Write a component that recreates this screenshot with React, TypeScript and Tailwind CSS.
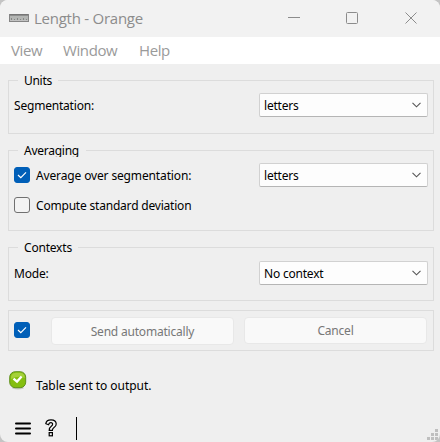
import type { ReactNode } from 'react';

const uiFont = "font-['Noto_Sans','DejaVu_Sans',sans-serif]";
const titleFont = "font-['Open_Sans','Noto_Sans',sans-serif]";

function Group({ title, legendClass, className, children }: { title: string; legendClass: string; className: string; children: ReactNode }) {
  return (
    <section className={`relative border border-[#dcdcdc] ${className}`}>
      <h2 className={`absolute left-[9px] -top-[9px] bg-[#efefef] pl-[6px] leading-[18px] whitespace-nowrap ${legendClass}`}>{title}</h2>
      {children}
    </section>
  );
}

function Select({ value, textClass }: { value: string; textClass: string }) {
  return (
    <div className="flex h-6 w-[169px] items-center justify-between rounded-[2px] border border-[#d1d1d1] border-b-[#b5b5b5] bg-[#fdfdfd] pr-[6px] pl-1">
      <span className={`pt-[2px] ${textClass}`}>{value}</span>
      <svg width="9" height="6" viewBox="0 0 9 6" fill="none" stroke="#555" strokeWidth="1.1">
        <path d="M0.5 0.8 L4.5 4.8 L8.5 0.8" />
      </svg>
    </div>
  );
}

function Checkbox({ checked }: { checked?: boolean }) {
  return (
    <span className={`flex h-4 w-4 shrink-0 items-center justify-center rounded-[3px] border ${checked ? 'border-[#005fb8] bg-[#005fb8]' : 'border-[#707070] bg-[#f3f3f3]'}`}>
      {checked && (
        <svg width="10" height="8" viewBox="0 0 10 8" fill="none" stroke="#fff" strokeWidth="1.2">
          <path d="M1 4 L3.8 6.6 L9 1.4" />
        </svg>
      )}
    </span>
  );
}

export default function App() {
  return (
    <div className="h-[442px] w-[440px] overflow-hidden bg-[#c4c4c4]">
      <main className={`relative flex h-[442px] flex-col overflow-hidden rounded-[8px] bg-[#efefef] text-[12px] text-black ${uiFont}`}>
        <header className={`flex h-[37px] shrink-0 items-center bg-[#f2f2f2] text-[#8c8c8c] ${titleFont}`}>
          <svg className="mb-px ml-[9px]" width="20" height="8" viewBox="0 0 20 8">
            <rect x="0.5" y="0.5" width="19" height="7" fill="#b4b6b4" stroke="#858585" />
            <path d="M1 1H19" stroke="#666" />
            <path d="M2.5 6V4M5.5 6V5M8.5 6V4M11.5 6V5M14.5 6V4M17.5 6V5" stroke="#858785" />
            <path d="M1 6.5H19" stroke="#c2c2c2" />
          </svg>
          <span className="mb-px ml-[5px] w-[252px] text-[15px] leading-5 tracking-[-0.25px]">Length - Orange</span>
          <svg className="mb-px" width="132" height="14" viewBox="0 0 132 14" fill="none" stroke="#8c8c8c">
            <path d="M2 6.5H14" />
            <rect x="60.5" y="1.5" width="11" height="11" rx="1" />
            <path d="M119.5 1.5 L130.5 12.5 M130.5 1.5 L119.5 12.5" />
          </svg>
        </header>
        <nav className={`flex h-[27px] shrink-0 items-center bg-white pl-[11px] text-[15px] text-[#9a9a9a] ${titleFont}`}>
          <span className="w-[52px] tracking-[-0.4px]">View</span>
          <span className="w-[76px] tracking-[-0.4px]">Window</span>
          <span className="tracking-[-0.4px]">Help</span>
        </nav>

        <div className="flex flex-col pr-[6px] pl-2 pt-4">
          <Group title="Units" legendClass="w-[40px] tracking-[-0.3px]" className="h-[54px]">
            <div className="flex items-center justify-between pt-3 pr-[5px] pl-[5px]">
              <span className="pt-[2px] tracking-[-0.2px]">Segmentation:</span>
              <Select value="letters" textClass="tracking-[-0.2px]" />
            </div>
          </Group>
          <Group title="Averaging" legendClass="h-[15px] w-[68px] overflow-hidden tracking-[-0.25px]" className="mt-4 h-[81px]">
            <div className="flex items-center pt-3 pr-[5px] pl-[5px]">
              <Checkbox checked />
              <span className="ml-[6px] grow pt-[2px] tracking-[-0.14px]">Average over segmentation:</span>
              <Select value="letters" textClass="tracking-[-0.2px]" />
            </div>
            <div className="mt-[9px] flex h-[18px] items-center pl-[5px]">
              <Checkbox />
              <span className="ml-[6px] pt-[2px] leading-[18px] tracking-[-0.2px]">Compute standard deviation</span>
            </div>
          </Group>
          <Group title="Contexts" legendClass="w-[60px] tracking-[-0.2px]" className="mt-4 h-[54px]">
            <div className="flex items-center justify-between pt-[13px] pr-[5px] pl-[5px]">
              <span className="pt-[2px] tracking-[-0.2px]">Mode:</span>
              <Select value="No context" textClass="tracking-[-0.2px]" />
            </div>
          </Group>
          <section className="mt-[9px] flex h-[41px] items-start border border-[#dcdcdc] pt-[6px] pl-[5px]">
            <div className="pt-[5px]"><Checkbox checked /></div>
            <button className="ml-[21px] h-7 w-[183px] rounded-[4px] border border-[#e8e8e8] bg-[#f9f9f9] pt-[2px] text-[#777] tracking-[-0.2px]">Send automatically</button>
            <button className="ml-[10px] h-[27px] w-[183px] rounded-[4px] border border-[#e8e8e8] bg-[#f9f9f9] text-[#777] tracking-[-0.2px]">Cancel</button>
          </section>
        </div>

        <div className="mt-5 flex h-[24px] items-start pl-[9px]">
          <svg width="18" height="19" viewBox="0 0 18 19">
            <ellipse cx="9" cy="17" rx="6" ry="1.5" fill="#c9cbc5" />
            <rect x="0.7" y="0.7" width="16" height="16" rx="5.5" fill="#84be10" stroke="#578a12" strokeWidth="0.9" />
            <path d="M2 8 Q1.5 2 7 1.8 H11 Q16 2 15.8 7 Q9 4 2 8Z" fill="#a5d13a" />
            <path d="M4.5 7.6 L8 10.6 L12.6 5.4" fill="none" stroke="#fff" strokeWidth="2.3" />
          </svg>
          <span className="mt-[6px] ml-[9px] leading-[18px] tracking-[-0.04px]">Table sent to output.</span>
        </div>
        <footer className="mt-[22px] flex h-[23px] items-start pl-[15px]">
          <svg className="mt-[5px]" width="16" height="13" viewBox="0 0 16 13">
            <path d="M1 1.5H15M1 6.5H15M1 11.5H15" stroke="#000" strokeWidth="2" strokeLinecap="round" />
          </svg>
          <svg className="mt-[2px] ml-[14px]" width="12" height="18" viewBox="0 0 12 18" fill="#f4f4f4" stroke="#000" strokeWidth="1.2">
            <path d="M0.8 4.7 Q1.3 0.8 6 0.8 Q11.2 0.8 11.2 5 Q11.2 7.2 9 8.5 Q7.4 9.4 7.4 11.4 H4.2 Q4.1 8.7 6.3 7.2 Q8 6.1 7.6 4.8 Q7.1 3.3 5.5 3.7 Q4 4 3.6 5.7 Z" />
            <rect x="4.2" y="13.6" width="3.2" height="3.2" />
          </svg>
          <span className="ml-[19px] h-[23px] w-px bg-black" />
        </footer>
        <svg className="absolute right-0 bottom-0" width="13" height="13" viewBox="0 0 13 13" fill="#bfbfbf">
          <path d="M8 0h3v3h-3zM4 4h3v3h-3zM8 4h3v3h-3zM0 8h3v3h-3zM4 8h3v3h-3zM8 8h3v3h-3z" />
        </svg>
      </main>
    </div>
  );
}
